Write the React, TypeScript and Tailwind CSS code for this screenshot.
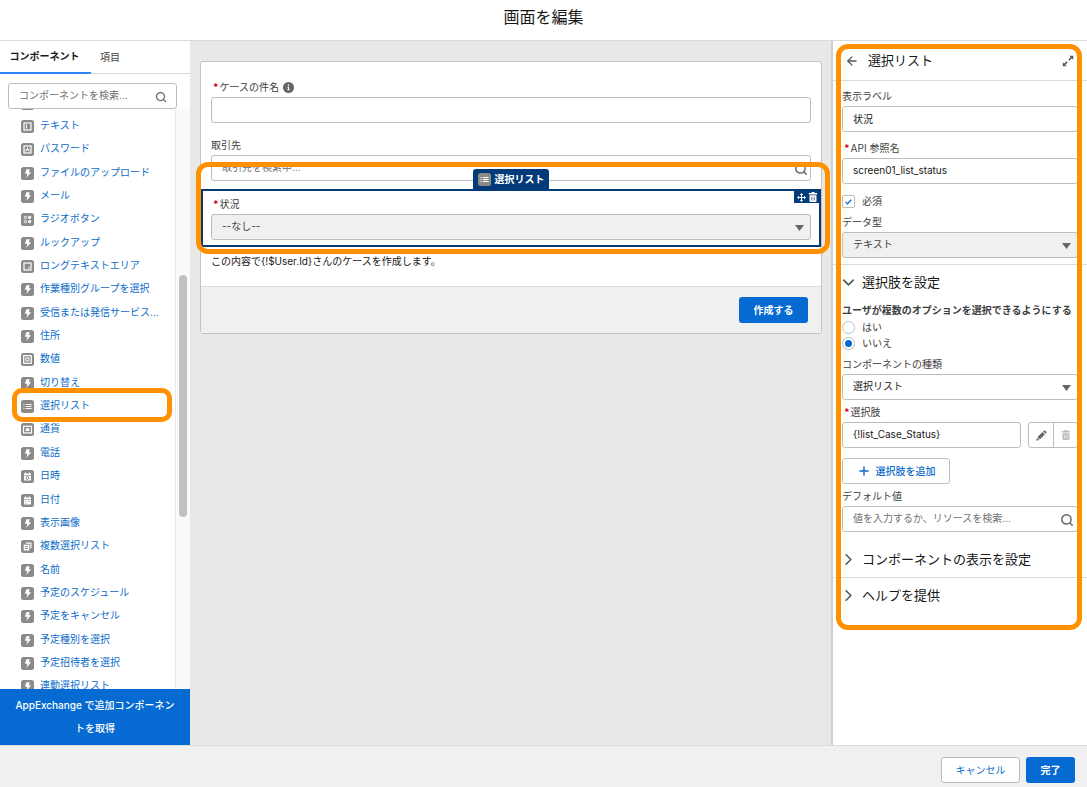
import { useState } from "react";
import type { ReactNode } from "react";
import { ArrowLeft, ChevronDown, ChevronRight, Plus, Search } from "lucide-react";
import clsx from "clsx";

type IconName =
  | "bolt"
  | "text"
  | "password"
  | "radio"
  | "textarea"
  | "number"
  | "list"
  | "currency"
  | "datetime"
  | "date"
  | "multi";

const components: { label: string; icon: IconName }[] = [
  { label: "チェックボックス", icon: "bolt" },
  { label: "テキスト", icon: "text" },
  { label: "パスワード", icon: "password" },
  { label: "ファイルのアップロード", icon: "bolt" },
  { label: "メール", icon: "bolt" },
  { label: "ラジオボタン", icon: "radio" },
  { label: "ルックアップ", icon: "bolt" },
  { label: "ロングテキストエリア", icon: "textarea" },
  { label: "作業種別グループを選択", icon: "bolt" },
  { label: "受信または発信サービス...", icon: "bolt" },
  { label: "住所", icon: "bolt" },
  { label: "数値", icon: "number" },
  { label: "切り替え", icon: "bolt" },
  { label: "選択リスト", icon: "list" },
  { label: "通貨", icon: "currency" },
  { label: "電話", icon: "bolt" },
  { label: "日時", icon: "datetime" },
  { label: "日付", icon: "date" },
  { label: "表示画像", icon: "bolt" },
  { label: "複数選択リスト", icon: "multi" },
  { label: "名前", icon: "bolt" },
  { label: "予定のスケジュール", icon: "bolt" },
  { label: "予定をキャンセル", icon: "bolt" },
  { label: "予定種別を選択", icon: "bolt" },
  { label: "予定招待者を選択", icon: "bolt" },
  { label: "連動選択リスト", icon: "bolt" },
];

const fieldClass =
  "block h-[26px] w-full rounded-[3px] border border-[#bdbdbd] bg-white px-[10px] pb-[2px] text-[10px] text-[#181818] placeholder:text-[#707070] outline-none";

const glyphs: Record<IconName, ReactNode> = {
  bolt: <path d="M5.4 2.3h3.4L7.8 5.300h2.300L5.300 11l1.100-4.200H3.900z" fill="#fff" />,
  text: (
    <g fill="none" stroke="#fff">
      <rect x="3" y="3" width="7" height="7" strokeWidth="1.200" />
      <path d="M5.500 4.500v4" />
    </g>
  ),
  password: (
    <g fill="none" stroke="#fff">
      <rect x="3" y="3" width="7" height="7" strokeWidth="1.200" />
      <path d="M6.500 4.500v2M5 8.500v-2h3v2" />
    </g>
  ),
  radio: (
    <g fill="#fff" stroke="#fff">
      <circle cx="4.400" cy="4.400" r="1.200" fill="none" />
      <circle cx="4.400" cy="8.600" r="1.200" fill="none" />
      <circle cx="8.600" cy="4.400" r="1.200" />
      <circle cx="8.600" cy="8.600" r="1.200" />
    </g>
  ),
  textarea: (
    <g fill="none" stroke="#fff">
      <rect x="3" y="3" width="7" height="7" strokeWidth="1.200" />
      <path d="M7 8h1.200V7" />
    </g>
  ),
  number: (
    <g fill="none" stroke="#fff">
      <rect x="2.700" y="2.700" width="7.600" height="7.600" strokeWidth="1.200" />
      <rect x="5" y="5" width="3" height="3" />
    </g>
  ),
  list: (
    <g stroke="#fff" strokeWidth="1">
      <path d="M2.500 4.500h1M2.500 6.500h1M2.500 8.500h1M4.800 4.500h5.700M4.800 6.500h5.700M4.800 8.500h5.700" />
    </g>
  ),
  currency: (
    <g fill="none" stroke="#fff">
      <rect x="2.500" y="3.300" width="8" height="6.600" strokeWidth="1.200" />
      <rect x="5.200" y="5.800" width="2.600" height="1.800" fill="#fff" />
    </g>
  ),
  datetime: (
    <g fill="#fff">
      <path d="M3 3.600h1V2.500h1.200v1.100h2.600V2.500H9v1.100h1v1.300H3z" />
      <path d="M3 5.600h7v4.900H3z" />
      <circle cx="6.500" cy="8" r="1.400" fill="none" stroke="#8b8a88" />
    </g>
  ),
  date: (
    <g fill="#fff">
      <path d="M3 3.600h1V2.500h1.200v1.100h2.600V2.500H9v1.100h1v1.300H3z" />
      <path d="M3 5.600h7v4.900H3z" />
      <path d="M4.500 7.500h1M7.500 7.500h1M4.500 9.200h1" stroke="#8b8a88" strokeWidth=".9" />
    </g>
  ),
  multi: (
    <g>
      <path d="M4.900 3.800V2.500h5.600v5.700H9.300V3.800z" fill="#fff" />
      <path d="M2.700 4.700h5.700v5.800H2.700z" fill="#fff" />
      <path d="M4 6.600h3M4 8.500h3" stroke="#8b8a88" strokeWidth=".9" />
    </g>
  ),
};

function ComponentIcon({ name }: { name: IconName }) {
  return (
    <svg width="13" height="13" viewBox="0 0 13 13" className="shrink-0" aria-hidden="true">
      <rect width="13" height="13" rx="2.500" fill="#8b8a88" />
      {glyphs[name]}
    </svg>
  );
}

function TrashIcon({ className }: { className?: string }) {
  return (
    <svg width="10" height="10" viewBox="0 0 10 10" fill="currentColor" className={className} aria-hidden="true">
      <path d="M3.400 1V.6c0-.3.2-.6.5-.6h2.200c.3 0 .5.3.5.6V1h2.600v1.400H.8V1z" />
      <path
        fillRule="evenodd"
        d="M1.500 3.200h7v5.900c0 .5-.4.9-.9.9H2.400c-.5 0-.9-.4-.9-.9zM3.500 4.700v3.800h.7v-3.800zm2.300 0v3.800h.7v-3.800z"
      />
    </svg>
  );
}

function MoveIcon() {
  return (
    <svg width="9" height="9" viewBox="0 0 10 10" fill="currentColor" aria-hidden="true">
      <path d="M5 0l1.900 2.200H5.600v2.200h2.200V3.100L10 5 7.800 6.900V5.600H5.600v2.200h1.300L5 10 3.100 7.800h1.300V5.600H2.200v1.300L0 5l2.200-1.900v1.300h2.200V2.200H3.100z" />
    </svg>
  );
}

function PencilIcon() {
  return (
    <svg width="11" height="11" viewBox="0 0 11 11" fill="#666" aria-hidden="true">
      <path d="M7.900.7c.4-.4 1-.4 1.300 0l1 1c.4.4.4 1 0 1.300l-.8.8L7.100 1.500zM6.500 2.100l2.300 2.300-5 5-2.300-2.300zM1 7.800L3.100 9.900.3 10.700z" />
    </svg>
  );
}

function ExpandIcon() {
  return (
    <svg width="12" height="12" viewBox="0 0 12 12" fill="#555" aria-hidden="true">
      <path d="M7.300.8h3.900v3.900zM.8 7.300v3.900h3.900z" />
      <path d="M9.500 2.500L6.900 5.100M2.500 9.500L5.100 6.900" fill="none" stroke="#555" strokeWidth="1.500" />
    </svg>
  );
}

function InfoIcon() {
  return (
    <svg width="11" height="11" viewBox="0 0 11 11" aria-hidden="true">
      <circle cx="5.500" cy="5.500" r="5.500" fill="#666" />
      <path d="M5.500 2.600v1.300M4.500 5.200h1v2.500M4.400 7.700h2.200" stroke="#fff" strokeWidth="1.100" fill="none" />
    </svg>
  );
}

function Label({ htmlFor, required, children }: { htmlFor: string; required?: boolean; children: ReactNode }) {
  return (
    <label htmlFor={htmlFor} className="mb-[2px] flex h-4 items-center text-[10px] leading-4 text-[#3e3e3c]">
      {required && <span className="mr-[1px] ml-[2px] font-bold text-[#d0021b]">*</span>}
      {children}
    </label>
  );
}

function SelectField({ id, options, muted }: { id: string; options: string[]; muted?: boolean }) {
  return (
    <div className="relative">
      <select
        id={id}
        className={clsx(
          "block h-[26px] w-full appearance-none rounded-[3px] border border-[#bdbdbd] px-[10px] pb-[2px] text-[10px] outline-none",
          muted ? "bg-[#f0f0f0] text-[#3e3e3c]" : "bg-white text-[#181818]"
        )}
      >
        {options.map((option) => (
          <option key={option}>{option}</option>
        ))}
      </select>
      <svg width="9" height="6" viewBox="0 0 9 6" className="pointer-events-none absolute top-[11px] right-[7px]">
        <path d="M0 0h9L4.500 6z" fill="#666" />
      </svg>
    </div>
  );
}

function Sidebar() {
  return (
    <aside className="flex w-[190px] shrink-0 flex-col bg-white">
      <div className="flex h-[33px] shrink-0 border-b border-[#dddbda] text-[10px]" role="tablist">
        <button role="tab" aria-selected="true" className="-mb-px w-[91px] border-b-2 border-[#2f86f6] pr-[2px] text-center font-bold text-[#181818]">
          コンポーネント
        </button>
        <button role="tab" aria-selected="false" className="px-[9px] text-[#3e3e3c]">
          項目
        </button>
      </div>
      <div className="relative mt-[9px] mr-[13px] ml-2 shrink-0">
        <input type="search" aria-label="コンポーネントを検索" placeholder="コンポーネントを検索..." className={fieldClass} />
        <Search size={12} strokeWidth={2.5} className="absolute top-[8px] right-[10px] text-[#666]" />
      </div>
      <div className="flex min-h-0 flex-1 overflow-hidden">
        <ul className="-mt-[19px] -mb-2 flex min-w-0 flex-1 flex-col pl-[21px]">
          {components.map((item) => (
            <li key={item.label} className="flex min-h-[20px] flex-1 items-center">
              <a href="#" className="flex items-center gap-[6px] text-[10px] leading-4 whitespace-nowrap text-[#0b6cc9]">
                <span className="pt-[3px]">
                  <ComponentIcon name={item.icon} />
                </span>
                {item.label}
              </a>
            </li>
          ))}
        </ul>
        <div className="flex w-[15px] shrink-0 justify-center border-l border-[#e8e8e8] bg-[#fafafa]">
          <div className="mt-[166px] h-[242px] w-2 rounded-full bg-[#c1c1c1]" />
        </div>
      </div>
      <button className="h-[56px] shrink-0 bg-[#056bd2] px-3 text-[10px] leading-[23px] font-medium text-white">
        AppExchange で追加コンポーネントを取得
      </button>
    </aside>
  );
}

function Canvas() {
  return (
    <main className="min-w-0 flex-1 bg-[#e9e8e7] pt-5 pr-[9px] pl-[10px]">
      <div className="rounded-[3px] border border-[#c4c4c4] bg-white">
        <div className="px-[10px] pt-[17px]">
          <div className="flex gap-1">
            <Label htmlFor="case-subject" required>
              ケースの件名
            </Label>
            <button aria-label="ヘルプ" className="mb-[1px]">
              <InfoIcon />
            </button>
          </div>
          <input id="case-subject" type="text" className={fieldClass} />
          <div className="mt-[14px]">
            <Label htmlFor="account">取引先</Label>
            <div className="relative">
              <input id="account" type="text" placeholder="取引先を検索中..." className={fieldClass} />
              <Search size={14} strokeWidth={2.5} className="absolute top-[7px] right-[3px] text-[#666]" />
            </div>
          </div>
        </div>
        <div className="relative mt-2 border-2 border-[#033b79] px-2 pt-[5px] pb-[5px]">
          <div className="absolute bottom-full left-[270px] mb-[2px] flex h-[20px] w-[76px] items-center justify-center gap-1 rounded-t-[3px] bg-[#033b79] text-[10px] font-bold whitespace-nowrap text-white">
            <ComponentIcon name="list" />
            選択リスト
          </div>
          <div className="absolute top-0 right-0 flex h-[12px] items-center gap-[2px] bg-[#033b79] pr-[1px] pl-[3px] text-white">
            <button aria-label="移動">
              <MoveIcon />
            </button>
            <button aria-label="削除">
              <TrashIcon />
            </button>
          </div>
          <Label htmlFor="case-status" required>
            状況
          </Label>
          <SelectField id="case-status" options={["--なし--"]} muted />
          {/* highlight round the selected component */}
          <div className="pointer-events-none absolute -top-[29px] -right-[11px] -bottom-[9px] -left-[7px] z-10 rounded-[12px] border-[5px] border-[#ff9100]" />
        </div>
        <p className="px-[10px] pt-[6px] pb-[17px] text-[10px] leading-4 text-[#181818]">
          この内容で{"{!$User.Id}"}さんのケースを作成します。
        </p>
        <div className="flex justify-end border-t border-[#dddbda] bg-[#f0f0f0] px-[13px] py-[10px]">
          <button className="h-[26px] w-[69px] rounded-[3px] bg-[#056bd2] text-[10px] font-bold text-white">作成する</button>
        </div>
      </div>
    </main>
  );
}

function Section({ title, open }: { title: string; open?: boolean }) {
  return (
    <button className="flex h-[18px] items-center gap-1 text-[13px] leading-[18px] text-[#181818]" aria-expanded={!!open}>
      {open ? (
        <ChevronDown size={19} strokeWidth={2} className="-ml-[3px] text-[#555]" />
      ) : (
        <ChevronRight size={19} strokeWidth={2} className="-ml-[3px] text-[#555]" />
      )}
      {title}
    </button>
  );
}

function PropertyPanel() {
  const [required, setRequired] = useState(true);
  const [multiple, setMultiple] = useState("no");

  return (
    <section className="relative w-[256px] shrink-0 border-l-2 border-[#cfcecd] bg-white">
      <div className="flex h-10 items-center border-b border-[#dddbda] pr-[13px] pl-3">
        <button aria-label="戻る">
          <ArrowLeft size={14} strokeWidth={2.2} className="text-[#555]" />
        </button>
        <h2 className="ml-[9px] flex-1 pb-[2px] text-[13px] leading-[18px] text-[#181818]">選択リスト</h2>
        <button aria-label="拡大">
          <ExpandIcon />
        </button>
      </div>
      <div className="border-b border-[#dddbda] pt-[7px] pr-[9px] pb-[6px] pl-[9px]">
        <Label htmlFor="display-label">表示ラベル</Label>
        <input id="display-label" type="text" defaultValue="状況" className={fieldClass} />
        <div className="mt-2">
          <Label htmlFor="api-name" required>
            API 参照名
          </Label>
          <input id="api-name" type="text" defaultValue="screen01_list_status" className={fieldClass} />
        </div>
        <label className="mt-[9px] mb-[5px] flex h-4 items-center gap-[7px] text-[10px] text-[#3e3e3c]">
          <span className="relative flex">
            <input
              type="checkbox"
              checked={required}
              onChange={(e) => setRequired(e.target.checked)}
              className="size-[13px] appearance-none rounded-[2px] border border-[#bdbdbd] bg-white"
            />
            {required && (
              <svg width="7" height="6" viewBox="0 0 7 6" className="pointer-events-none absolute top-[4px] left-[3px]">
                <path d="M.7 3l1.800 1.900L6.300.8" fill="none" stroke="#056bd2" strokeWidth="1.300" />
              </svg>
            )}
          </span>
          必須
        </label>
        <Label htmlFor="data-type">データ型</Label>
        <SelectField id="data-type" options={["テキスト"]} muted />
      </div>
      <div className="pt-2 pr-[9px] pl-[9px]">
        <Section title="選択肢を設定" open />
        <fieldset className="mt-[11px] text-[10px] text-[#3e3e3c]">
          <legend className="h-[17px] leading-4 font-bold whitespace-nowrap text-[#3e3e3c]">
            ユーザが複数のオプションを選択できるようにする
          </legend>
          {[
            { value: "yes", label: "はい" },
            { value: "no", label: "いいえ" },
          ].map((option) => (
            <label key={option.value} className="flex h-4 items-center gap-[7px]">
              <input
                type="radio"
                name="multiple"
                value={option.value}
                checked={multiple === option.value}
                onChange={() => setMultiple(option.value)}
                className="size-[13px] appearance-none rounded-full border border-[#bdbdbd] bg-white bg-clip-content p-[2px] checked:bg-[#056bd2]"
              />
              {option.label}
            </label>
          ))}
        </fieldset>
        <div className="mt-[5px]">
          <Label htmlFor="component-type">コンポーネントの種類</Label>
          <SelectField id="component-type" options={["選択リスト"]} />
        </div>
        <div className="mt-1">
          <Label htmlFor="choice" required>
            選択肢
          </Label>
          <div className="flex gap-[7px]">
            <input id="choice" type="text" defaultValue="{!list_Case_Status}" className={clsx(fieldClass, "min-w-0 flex-1")} />
            <div className="flex shrink-0 rounded-[3px] border border-[#bdbdbd]">
              <button aria-label="編集" className="flex w-6 items-center justify-center">
                <PencilIcon />
              </button>
              <button aria-label="削除" disabled className="flex w-6 items-center justify-center border-l border-[#bdbdbd]">
                <TrashIcon className="text-[#bdbdbd]" />
              </button>
            </div>
          </div>
        </div>
        <button className="mt-[10px] flex h-[26px] w-[108px] items-center justify-center gap-[5px] rounded-[3px] border border-[#bdbdbd] text-[10px] font-medium text-[#0b6cc9]">
          <Plus size={14} strokeWidth={2.5} />
          選択肢を追加
        </button>
        <div className="mt-1">
          <Label htmlFor="default-value">デフォルト値</Label>
          <div className="relative">
            <input id="default-value" type="text" placeholder="値を入力するか、リソースを検索..." className={fieldClass} />
            <Search size={14} strokeWidth={2.5} className="absolute top-[7px] right-1 text-[#666]" />
          </div>
        </div>
      </div>
      <div className="mt-[18px] border-b border-[#dddbda] px-[9px] pb-[9px]">
        <Section title="コンポーネントの表示を設定" />
      </div>
      <div className="px-[9px] py-2">
        <Section title="ヘルプを提供" />
      </div>
      {/* highlight round the property fields */}
      <div className="pointer-events-none absolute top-[3px] right-[5px] left-[3px] h-[586px] rounded-[12px] border-[5px] border-[#ff9100]" />
    </section>
  );
}

export default function App() {
  return (
    <div className="flex h-screen flex-col overflow-hidden bg-white font-['Inter','Noto_Sans_CJK_JP',sans-serif] text-[#181818]">
      <header className="flex h-[41px] shrink-0 justify-center border-b border-[#dddbda] pt-[5px]">
        <h1 className="text-base leading-6">画面を編集</h1>
      </header>
      <div className="flex min-h-0 flex-1">
        <div className="relative flex">
          <Sidebar />
          {/* highlight round the list item */}
          <div className="pointer-events-none absolute top-[347px] left-[12px] h-[34px] w-[160px] rounded-[10px] border-[5px] border-[#ff9100]" />
        </div>
        <Canvas />
        <PropertyPanel />
      </div>
      <footer className="flex shrink-0 justify-end gap-[6px] border-t border-[#dddbda] bg-[#f0f0f0] pt-[11px] pr-3 pb-1 text-[10px]">
        <button className="h-[26px] w-[79px] rounded-[3px] border border-[#bdbdbd] bg-white text-[#0b6cc9]">キャンセル</button>
        <button className="h-[26px] w-[49px] rounded-[3px] bg-[#056bd2] font-bold text-white">完了</button>
      </footer>
    </div>
  );
}
